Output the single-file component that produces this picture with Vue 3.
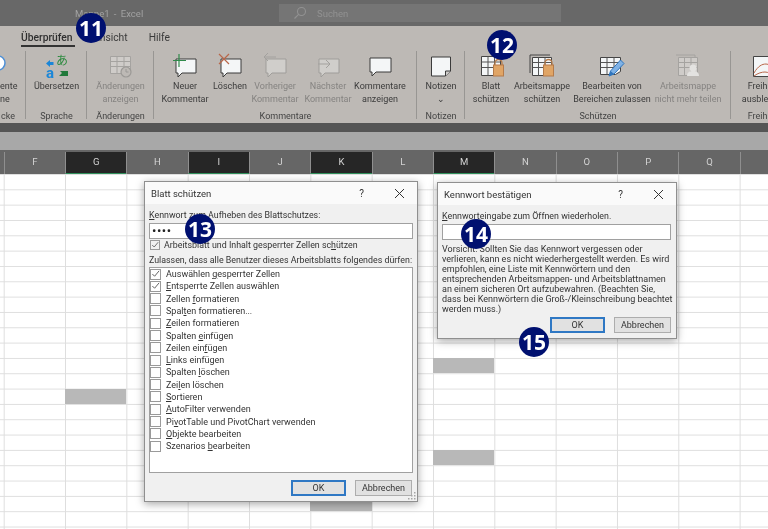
<template>
  <div class="screen">
    <div class="titlebar">
      <span class="doc-title">Mappe1 - Excel</span>
      <div class="search">
        <svg width="14" height="14" viewBox="0 0 14 14" fill="none" stroke="#929292" stroke-width="1.1">
          <circle cx="8.5" cy="5.5" r="4" />
          <path d="M5.6 8.4 1.5 12.5" />
        </svg>
        <span>Suchen</span>
      </div>
    </div>

    <nav class="tabs">
      <span class="tab active">Überprüfen</span>
      <span class="tab">Ansicht</span>
      <span class="tab">Hilfe</span>
    </nav>

    <section class="ribbon">
      <div class="group cut-left">
        <div class="group-items">
          <div class="tool">
            <svg class="icon" width="24" height="24" viewBox="0 0 24 24">
              <circle cx="-2" cy="9" r="7" fill="#fff" stroke="#4d8fd6" stroke-width="1.500" />
            </svg>
            <span class="label">ente<br />ne</span>
          </div>
        </div>
        <div class="group-name">cke</div>
      </div>

      <div class="group w-sprache">
        <div class="group-items">
          <div class="tool">
            <svg class="icon" width="24" height="24" viewBox="0 0 24 24">
              <path d="M1 9.500 5 6v2h3.500v3H5v2z" fill="#1a86d8" />
              <text x="1" y="24" class="glyph" fill="#1a86d8">a</text>
              <text x="11" y="11" class="glyph-jp" fill="#2c8a3e">あ</text>
              <path d="M23 22h-9l3-3-2-2h8z" fill="#21793a" />
            </svg>
            <span class="label">Übersetzen<br />&nbsp;</span>
          </div>
        </div>
        <div class="group-name">Sprache</div>
      </div>

      <div class="group w-aenderung">
        <div class="group-items">
          <div class="tool off">
            <svg class="icon" width="24" height="24" viewBox="0 0 24 24">
              <path d="M1.500 2.500h20v13l-6 4h-14z" fill="#cfccc9" stroke="#a5a3a0" />
              <path d="M1.500 7.500h20M1.500 12.500h20M8 2.500v17M15 2.500v15" stroke="#a5a3a0" fill="none" />
              <circle cx="17" cy="18" r="5" fill="#bdb9b5" stroke="#9b9996" stroke-width="1.2" />
              <path d="M17 15v3h2.500" stroke="#9b9996" fill="none" />
            </svg>
            <span class="label">Änderungen<br />anzeigen</span>
          </div>
        </div>
        <div class="group-name">Änderungen</div>
      </div>

      <div class="group w-komm">
        <div class="group-items">
          <div class="tool t-neu">
            <svg class="icon" width="24" height="24" viewBox="0 0 24 24">
              <path d="M3 5h20v14H9l-4 4v-4H3z" fill="#f4f6f7" stroke="#3b3b3b" />
              <path d="M6 0v13M0 6.500h13" stroke="#2f8a4a" stroke-width="1.2" />
            </svg>
            <span class="label">Neuer<br />Kommentar</span>
          </div>
          <div class="tool t-del">
            <svg class="icon" width="24" height="24" viewBox="0 0 24 24">
              <path d="M3 5h20v14H9l-4 4v-4H3z" fill="#f4f6f7" stroke="#3b3b3b" />
              <path d="M1 0 11 10M11 0 1 10" stroke="#b9674a" stroke-width="1.2" />
            </svg>
            <span class="label">Löschen<br />&nbsp;</span>
          </div>
          <div class="tool off t-prev">
            <svg class="icon" width="24" height="24" viewBox="0 0 24 24">
              <path d="M3 5h20v14H9l-4 4v-4H3z" fill="#d0cecb" stroke="#9f9d9a" />
              <path d="M13 3H1M5 -1 1 3l4 4" stroke="#a3a19e" fill="none" />
            </svg>
            <span class="label">Vorheriger<br />Kommentar</span>
          </div>
          <div class="tool off t-next">
            <svg class="icon" width="24" height="24" viewBox="0 0 24 24">
              <path d="M3 5h20v14H9l-4 4v-4H3z" fill="#d0cecb" stroke="#9f9d9a" />
              <path d="M2 10h12M10 6l4 4-4 4" stroke="#a3a19e" fill="none" />
            </svg>
            <span class="label">Nächster<br />Kommentar</span>
          </div>
          <div class="tool t-show">
            <svg class="icon" width="24" height="24" viewBox="0 0 24 24">
              <path d="M2 4h21v14H8l-4 4v-4H2z" fill="#f4f6f7" stroke="#3b3b3b" />
            </svg>
            <span class="label">Kommentare<br />anzeigen</span>
          </div>
        </div>
        <div class="group-name">Kommentare</div>
      </div>

      <div class="group w-notiz">
        <div class="group-items">
          <div class="tool">
            <svg class="icon" width="24" height="24" viewBox="0 0 24 24">
              <path d="M2.500 3h19v14l-5 5h-14z" fill="#f4f6f7" stroke="#3b3b3b" />
              <path d="M16.500 22v-5h5" fill="#cfcdcb" stroke="#3b3b3b" />
            </svg>
            <span class="label">Notizen<br /><span class="chev">⌄</span></span>
          </div>
        </div>
        <div class="group-name">Notizen</div>
      </div>

      <div class="group w-schutz">
        <div class="group-items">
          <div class="tool t-blatt">
            <svg class="icon" width="26" height="24" viewBox="0 0 26 24">
              <path d="M3.500 2.500h19v14l-5 5h-14z" fill="#f4f6f7" stroke="#444" />
              <path d="M3.500 8h19M3.500 13.500h19M10 2.500v19M16.500 2.500v16" stroke="#555" fill="none" />
              <path d="M17 11V9a3.500 3.500 0 0 1 7 0v2" fill="none" stroke="#b57b4a" stroke-width="1.300" />
              <rect x="15.500" y="11" width="10" height="11" fill="#e0a566" stroke="#b57b4a" />
            </svg>
            <span class="label">Blatt<br />schützen</span>
          </div>
          <div class="tool t-mappe">
            <svg class="icon" width="26" height="24" viewBox="0 0 26 24">
              <path d="M1 1h20M1 1v18" fill="none" stroke="#444" />
              <path d="M3.500 3.500h19v13l-5 5h-14z" fill="#f4f6f7" stroke="#444" />
              <path d="M3.500 8.500h19M3.500 13.500h19M9.500 3.500v18M16 3.500v14" stroke="#555" fill="none" />
              <path d="M16 11V9a3.500 3.500 0 0 1 7 0v2" fill="none" stroke="#b57b4a" stroke-width="1.300" />
              <rect x="14.500" y="11" width="10" height="11" fill="#e0a566" stroke="#b57b4a" />
            </svg>
            <span class="label">Arbeitsmappe<br />schützen</span>
          </div>
          <div class="tool t-bereich">
            <svg class="icon" width="26" height="24" viewBox="0 0 26 24">
              <path d="M1.500 3.500h20v14l-5 3h-15z" fill="#f4f6f7" stroke="#444" />
              <path d="M1.500 8.500h20M1.500 13.500h20M8 3.500v17M15 3.500v15" stroke="#555" fill="none" />
              <path d="M10 22l1.500-5L21.500 6l3.500 3.500L15 20z" fill="#7fb2e6" stroke="#2f75bd" />
              <path d="M10 22l1.500-5 3.500 3z" fill="#2f75bd" />
            </svg>
            <span class="label">Bearbeiten von<br />Bereichen zulassen</span>
          </div>
          <div class="tool off t-teilen">
            <svg class="icon" width="26" height="24" viewBox="0 0 26 24">
              <path d="M1 1h19v3" fill="none" stroke="#a5a3a0" />
              <path d="M3.500 3.500h19v18h-19z" fill="#cfccc9" stroke="#a5a3a0" />
              <path d="M3.500 8.500h19M3.500 13.500h19M9.500 3.500v18M16 3.500v18" stroke="#a5a3a0" fill="none" />
              <circle cx="18" cy="14" r="3.500" fill="#e3e2e0" />
              <path d="M12 22c0-4 3-5 6-5s6 1 6 5z" fill="#e3e2e0" />
            </svg>
            <span class="label">Arbeitsmappe<br />nicht mehr teilen</span>
          </div>
        </div>
        <div class="group-name">Schützen</div>
      </div>

      <div class="group w-freihand">
        <div class="group-items">
          <div class="tool">
            <svg class="icon" width="26" height="24" viewBox="0 0 26 24">
              <path d="M1.500 2.500h24v20h-24z" fill="#f4f6f7" stroke="#444" />
              <path d="M2 19c4-7 8-9 12-9s6 3 9 5M2 22c4-3 8-4 11-4s6 2 10 3" fill="none" stroke="#b9674a" />
            </svg>
            <span class="label">Freihand<br />ausblenden</span>
          </div>
        </div>
        <div class="group-name">Freihand</div>
      </div>
    </section>

    <div class="ribbon-shadow"></div>
    <div class="formula-bar"></div>

    <div class="col-headers">
      <span class="edge"></span>
      <span v-for="col in columns" :key="col" class="col" :class="{ sel: selectedCols.includes(col) }">{{ col }}</span>
    </div>

    <div class="sheet">
      <div
        v-for="cell in selectedCells"
        :key="cell.col + '-' + cell.row"
        class="cell-sel"
        :style="{ gridColumn: cell.col, gridRow: cell.row }"
      ></div>
    </div>

    <!-- Blatt schützen -->
    <div class="dialog dlg-blatt">
      <div class="dlg-title">
        <span>Blatt schützen</span>
        <span class="dlg-help">?</span>
        <svg class="dlg-close" width="11" height="11" viewBox="0 0 11 11" stroke="#333" fill="none">
          <path d="M1 1l9 9M10 1l-9 9" />
        </svg>
      </div>
      <div class="dlg-body">
        <div class="line"><u>K</u>ennwort zum Aufheben des Blattschutzes:</div>
        <div class="input pw">••••</div>
        <div class="check-line top-check">
          <span class="box checked">
            <svg width="10" height="10" viewBox="0 0 10 10" fill="none" stroke="#555"><path d="M1.500 5l2.500 2.500 5-6" /></svg>
          </span>
          <span>Arbeitsblatt und Inhalt gesperrter Zellen sc<u>h</u>ützen</span>
        </div>
        <div class="line allow">Zulassen, dass alle Benutzer dieses Arbeitsblatts folgendes dürfen:</div>
        <div class="perm-list">
          <div v-for="perm in permissions" :key="perm.text.join('')" class="check-line perm">
            <span class="box">
              <svg v-if="perm.on" width="10" height="10" viewBox="0 0 10 10" fill="none" stroke="#555"><path d="M1.500 5l2.500 2.500 5-6" /></svg>
            </span>
            <span>{{ perm.text[0] }}<u>{{ perm.text[1] }}</u>{{ perm.text[2] }}</span>
          </div>
        </div>
        <div class="dlg-buttons">
          <button class="btn primary">OK</button>
          <button class="btn">Abbrechen</button>
        </div>
      </div>
      <svg class="grip" width="8" height="8" viewBox="0 0 8 8" fill="#a5a5a5">
        <rect x="6" y="0" width="1.500" height="1.500" />
        <rect x="3" y="3" width="1.500" height="1.500" />
        <rect x="6" y="3" width="1.500" height="1.500" />
        <rect x="0" y="6" width="1.500" height="1.500" />
        <rect x="3" y="6" width="1.500" height="1.500" />
        <rect x="6" y="6" width="1.500" height="1.500" />
      </svg>
    </div>

    <!-- Kennwort bestätigen -->
    <div class="dialog dlg-pass">
      <div class="dlg-title">
        <span>Kennwort bestätigen</span>
        <span class="dlg-help">?</span>
        <svg class="dlg-close" width="11" height="11" viewBox="0 0 11 11" stroke="#333" fill="none">
          <path d="M1 1l9 9M10 1l-9 9" />
        </svg>
      </div>
      <div class="dlg-body">
        <div class="line"><u>K</u>ennworteingabe zum Öffnen wiederholen.</div>
        <div class="input"></div>
        <p class="warning">
          Vorsicht: Sollten Sie das Kennwort vergessen oder<br />
          verlieren, kann es nicht wiederhergestellt werden. Es wird<br />
          empfohlen, eine Liste mit Kennwörtern und den<br />
          entsprechenden Arbeitsmappen- und Arbeitsblattnamen<br />
          an einem sicheren Ort aufzubewahren. (Beachten Sie,<br />
          dass bei Kennwörtern die Groß-/Kleinschreibung beachtet<br />
          werden muss.)
        </p>
        <div class="dlg-buttons">
          <button class="btn primary">OK</button>
          <button class="btn">Abbrechen</button>
        </div>
      </div>
    </div>

    <span
      v-for="b in badges"
      :key="b.n"
      class="badge"
      :style="{ left: b.x - 15 + 'px', top: b.y - 15 + 'px' }"
    >{{ b.n }}</span>
  </div>
</template>

<script setup>
const columns = ['F', 'G', 'H', 'I', 'J', 'K', 'L', 'M', 'N', 'O', 'P', 'Q', 'R'];
const selectedCols = ['G', 'I', 'K', 'M'];

// grid positions of the grey cells in the sheet
const selectedCells = [
  { col: 8, row: 13 },
  { col: 2, row: 15 },
  { col: 8, row: 19 },
  { col: 6, row: 22 },
];

const permissions = [
  { on: true, text: ['Auswählen ', 'g', 'esperrter Zellen'] },
  { on: true, text: ['', 'E', 'ntsperrte Zellen auswählen'] },
  { on: false, text: ['Zellen ', 'f', 'ormatieren'] },
  { on: false, text: ['Spal', 't', 'en formatieren...'] },
  { on: false, text: ['', 'Z', 'eilen formatieren'] },
  { on: false, text: ['Spalten ', 'e', 'infügen'] },
  { on: false, text: ['Zeilen ein', 'f', 'ügen'] },
  { on: false, text: ['', 'L', 'inks einfügen'] },
  { on: false, text: ['Spalten ', 'l', 'öschen'] },
  { on: false, text: ['Zei', 'l', 'en löschen'] },
  { on: false, text: ['', 'S', 'ortieren'] },
  { on: false, text: ['', 'A', 'utoFilter verwenden'] },
  { on: false, text: ['Pi', 'v', 'otTable und PivotChart verwenden'] },
  { on: false, text: ['', 'O', 'bjekte bearbeiten'] },
  { on: false, text: ['Szenarios ', 'b', 'earbeiten'] },
];

const badges = [
  { n: 11, x: 91, y: 28 },
  { n: 12, x: 502, y: 45 },
  { n: 13, x: 200, y: 229 },
  { n: 14, x: 476, y: 234 },
  { n: 15, x: 534, y: 342 },
];
</script>

<style scoped>
.screen {
  position: relative;
  width: 768px;
  height: 529px;
  overflow: hidden;
  background: #fff;
  font-family: Roboto, 'Noto Sans', sans-serif;
  font-size: 9px;
  color: #333;
  filter: blur(0.3px);
}

/* title bar */
.titlebar {
  height: 26px;
  background: #686868;
  display: flex;
  align-items: center;
}
.doc-title {
  margin-left: 75px;
  width: 204px;
  color: #a2a2a2;
  font-size: 9.500px;
  word-spacing: 2px;
}
.search {
  width: 282px;
  height: 18px;
  background: #757575;
  display: flex;
  align-items: center;
  gap: 10px;
  padding-left: 14px;
  box-sizing: border-box;
  color: #929292;
  font-size: 9.500px;
}

/* tabs */
.tabs {
  height: 25px;
  background: #bdb9b5;
  display: flex;
  gap: 21px;
  padding-left: 21px;
  align-items: flex-start;
  font-size: 10.300px;
  color: #3a3a3a;
}
.tab {
  line-height: 24px;
  height: 21px;
  box-sizing: border-box;
}
.tab.active {
  font-weight: 500;
  border-bottom: 2px solid #333;
  color: #2f2f2f;
  width: 54px;
  white-space: nowrap;
  margin-right: -3px;
}

/* ribbon */
.ribbon {
  height: 72px;
  background: #bdb9b5;
  display: flex;
  overflow: hidden;
  white-space: nowrap;
}
.group {
  flex: none;
  display: flex;
  flex-direction: column;
  height: 72px;
  padding-top: 1px;
  box-sizing: border-box;
  background: linear-gradient(#989693, #989693) no-repeat right top / 1px 68px;
}
.group-items {
  flex: none;
  height: 58px;
  display: flex;
  justify-content: center;
}
.group-name {
  height: 13px;
  line-height: 13px;
  text-align: center;
  color: #444;
  font-size: 9px;
}
.tool {
  display: flex;
  flex-direction: column;
  align-items: center;
  flex: none;
  padding-top: 2px;
}
.icon {
  display: block;
  height: 24px;
  margin-bottom: 2px;
  overflow: visible;
  flex: none;
}
.label {
  text-align: center;
  line-height: 12.500px;
  color: #3b3b3b;
  font-size: 9px;
}
.off .label {
  color: #858381;
}
.chev {
  font-size: 9px;
}
.glyph {
  font: bold 15px Roboto, sans-serif;
}
.glyph-jp {
  font: 12px 'Noto Sans CJK JP', sans-serif;
}

.cut-left {
  width: 26px;
  overflow: hidden;
}
.cut-left .group-items {
  justify-content: flex-start;
}
.cut-left .group-name {
  text-align: left;
  padding-left: 1px;
}
.cut-left .tool {
  align-items: flex-start;
}
.cut-left .label {
  text-align: left;
}
.w-sprache {
  width: 61px;
}
.w-aenderung {
  width: 67px;
}
.w-komm {
  width: 263px;
}
.w-komm .group-items {
  justify-content: flex-start;
}
.t-neu {
  width: 50px;
  margin-left: 6px;
}
.t-del {
  width: 40px;
}
.t-prev {
  width: 50px;
}
.t-next {
  width: 56px;
}
.t-show {
  width: 48px;
}
.w-notiz {
  width: 48px;
}
.w-schutz {
  width: 266px;
}
.w-schutz .group-items {
  justify-content: flex-start;
}
.t-blatt {
  width: 44px;
  margin-left: 4px;
}
.t-mappe {
  width: 58px;
}
.t-bereich {
  width: 82px;
}
.t-teilen {
  width: 70px;
}
.w-freihand {
  width: 68px;
  background: none;
}

.ribbon-shadow {
  height: 9px;
  background: #555;
}
.formula-bar {
  height: 18px;
  background: #a8a8a8;
}

/* sheet */
.col-headers {
  height: 24px;
  background: #666;
  display: grid;
  grid-template-columns: 3.700px repeat(13, 61.330px);
  box-sizing: border-box;
  padding-top: 2px;
}
.edge {
  display: block;
}
.col {
  border-left: 1px solid #8f8f8f;
  text-align: center;
  line-height: 20px;
  color: #d4d4d4;
  font-size: 9.500px;
  box-sizing: border-box;
}
.col.sel {
  background: #262626;
  border-bottom: 1px solid #2f8f5b;
}
.sheet {
  height: 355px;
  padding-left: 3.700px;
  background-color: #fff;
  background-image: linear-gradient(to right, #dedede 1px, transparent 1px),
    linear-gradient(to bottom, #dedede 1px, transparent 1px);
  background-size: 61.330px 15.330px;
  background-position: 3.700px 0;
  display: grid;
  grid-template-columns: repeat(13, 61.330px);
  grid-auto-rows: 15.330px;
}
.cell-sel {
  background: #b8b8b8;
}

/* dialogs */
.dialog {
  position: absolute;
  background: #f0f0f0;
  border: 1px solid #8f8f8f;
  box-shadow: 0 2px 8px rgba(0, 0, 0, 0.35);
  box-sizing: border-box;
  color: #333;
}
.dlg-blatt {
  left: 144px;
  top: 181px;
  width: 274px;
  height: 321px;
}
.dlg-pass {
  left: 437px;
  top: 182px;
  width: 240px;
  height: 157px;
}
.dlg-title {
  height: 22px;
  display: flex;
  align-items: center;
  padding-left: 6px;
  background: #fafafa;
  font-size: 9.500px;
}
.dlg-help {
  margin-left: auto;
  font-size: 10px;
  margin-right: 30px;
}
.dlg-close {
  margin-right: 12px;
}
.dlg-body {
  padding: 5px 4px 0 4px;
}
.dlg-pass .dlg-body {
  padding: 5px 5px 0 4px;
}
.line {
  line-height: 13px;
  font-size: 8.850px;
  white-space: nowrap;
}
.input {
  height: 16px;
  background: #fff;
  border: 1px solid #a0a0a0;
  box-sizing: border-box;
  margin-top: 0.500px;
}
.dlg-pass .input {
  margin-top: 1px;
}
.pw {
  font-size: 13px;
  line-height: 13px;
  padding-left: 2px;
  letter-spacing: 0.500px;
  color: #222;
}
.check-line {
  display: flex;
  align-items: center;
  white-space: nowrap;
}
.top-check {
  height: 13px;
  gap: 4px;
  padding-left: 1px;
  font-size: 8.850px;
}
.allow {
  margin-top: 2px;
}
.box {
  flex: none;
  width: 11px;
  height: 11px;
  background: #fff;
  border: 1px solid #9a9a9a;
  box-sizing: border-box;
  display: flex;
  align-items: center;
  justify-content: center;
  overflow: visible;
}
.top-check .box {
  width: 10px;
  height: 10px;
  background: #f0f0f0;
}
.perm-list {
  height: 206px;
  margin-top: 0.500px;
  background: #fff;
  border: 1px solid #a0a0a0;
  box-sizing: border-box;
}
.perm {
  height: 12.290px;
  gap: 5px;
}
.dlg-buttons {
  display: flex;
  justify-content: flex-end;
  gap: 9px;
  margin-top: 7px;
  margin-right: 1px;
}
.dlg-pass .dlg-buttons {
  margin-top: 3px;
  margin-right: 0;
}
.btn {
  width: 57px;
  height: 16px;
  padding: 0;
  background: #e1e1e1;
  border: 1px solid #adadad;
  font: inherit;
  color: #333;
}
.btn.primary {
  width: 55px;
  border: 2px solid #2f78c4;
}
.warning {
  margin: 4px 0 0;
  line-height: 10px;
  font-size: 9px;
  white-space: nowrap;
}
.grip {
  position: absolute;
  right: 1px;
  bottom: 1px;
}

.badge {
  position: absolute;
  width: 30px;
  height: 30px;
  border-radius: 50%;
  background: #001070;
  color: #fff;
  font-size: 21px;
  font-weight: 700;
  line-height: 30px;
  text-align: center;
  font-family: 'Open Sans', sans-serif;
}
</style>
